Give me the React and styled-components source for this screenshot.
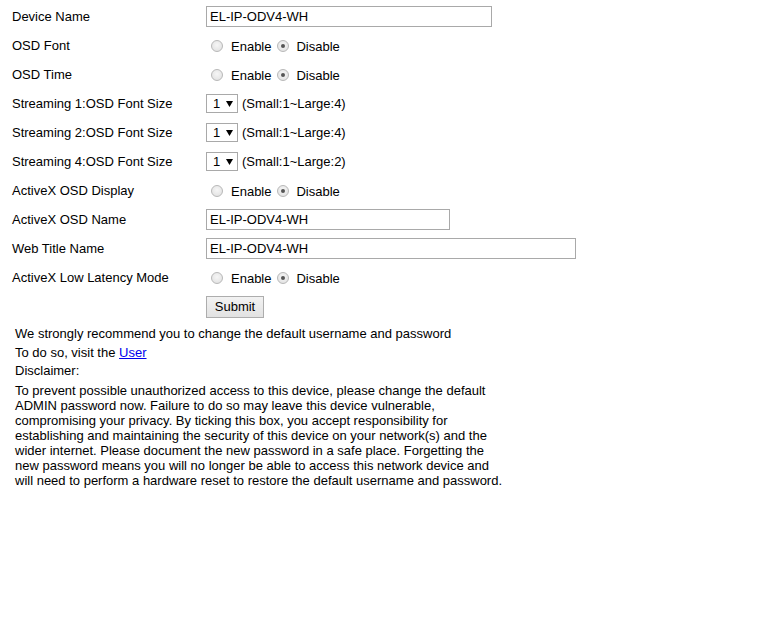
import React from "react";
import styled, { createGlobalStyle } from "styled-components";

const Global = createGlobalStyle`
  html, body { margin: 0; padding: 0; background: #fff; }
  body { font-family: "Liberation Sans", Arial, sans-serif; font-size: 13px; color: #000; }
`;

const Page = styled.div`
  padding: 2px 0 0 0;
`;

const Form = styled.div`
  display: grid;
  grid-template-columns: 194px auto;
  grid-auto-rows: 29px;
  padding-left: 12px;
  align-items: center;
`;

const Label = styled.div`
  font-size: 13px;
  line-height: 15px;
  margin-top: -1px;
`;

const Cell = styled.div`
  display: flex;
  align-items: center;
  height: 100%;
`;

const TextInput = styled.input`
  box-sizing: border-box;
  width: ${(p) => p.$w}px;
  height: 21px;
  border: 1px solid #a9a9a9;
  padding: 0 3px;
  font-family: "Liberation Sans", Arial, sans-serif;
  font-size: 13px;
  color: #000;
  background: #fff;
  outline: none;
  margin: 0;
`;

const RadioGroup = styled.div`
  display: flex;
  align-items: center;
  padding-top: 2px;
`;

const RadioDot = styled.span`
  box-sizing: border-box;
  width: 12px;
  height: 12px;
  border-radius: 50%;
  border: 1px solid #b8b8b8;
  background: radial-gradient(circle at 50% 40%, #f6f6f6 0%, #dedede 100%);
  display: inline-flex;
  align-items: center;
  justify-content: center;
  margin: -2px ${(p) => p.$mr}px 0 ${(p) => p.$ml}px;
  &::after {
    content: "";
    width: 4px;
    height: 4px;
    border-radius: 50%;
    background: ${(p) => (p.$on ? "#555" : "transparent")};
  }
`;

const RadioText = styled.span`
  font-size: 13px;
`;

const SelectBox = styled.div`
  box-sizing: border-box;
  width: 32px;
  height: 19px;
  border: 1px solid #a9a9a9;
  display: flex;
  align-items: center;
  padding-left: 6px;
  gap: 6px;
  font-size: 13px;
  background: #fff;
`;

const Hint = styled.span`
  margin-left: 4px;
  font-size: 13px;
`;

const Button = styled.button`
  box-sizing: border-box;
  height: 22px;
  width: 58px;
  border: 1px solid #adadad;
  border-radius: 0;
  background: linear-gradient(#f2f2f2, #e2e2e2);
  font-family: "Liberation Sans", Arial, sans-serif;
  font-size: 13px;
  color: #000;
  padding: 0;
  margin-top: 0;
`;

const Notice = styled.div`
  padding: 4px 0 0 15px;
`;

const Line = styled.div`
  line-height: 18.5px;
`;

const Link = styled.a`
  color: #0000ee;
  text-decoration: underline;
`;

const Para = styled.p`
  margin: 2px 0 0 0;
  width: 490px;
  line-height: 15px;
`;

function Radio() {
  return (
    <RadioGroup>
      <RadioDot $ml={5} $mr={8} $on={false} />
      <RadioText>Enable</RadioText>
      <RadioDot $ml={6} $mr={7} $on={true} />
      <RadioText>Disable</RadioText>
    </RadioGroup>
  );
}

function Select({ hint }) {
  return (
    <>
      <SelectBox>
        <span>1</span>
        <svg width="7" height="6" viewBox="0 0 7 6">
          <path d="M0 0H7L3.5 6Z" fill="#000" />
        </svg>
      </SelectBox>
      <Hint>{hint}</Hint>
    </>
  );
}

export default function App() {
  return (
    <Page>
      <Global />
      <Form>
        <Label>Device Name</Label>
        <Cell><TextInput $w={286} defaultValue="EL-IP-ODV4-WH" /></Cell>
        <Label>OSD Font</Label>
        <Cell><Radio /></Cell>
        <Label>OSD Time</Label>
        <Cell><Radio /></Cell>
        <Label>Streaming 1:OSD Font Size</Label>
        <Cell><Select hint="(Small:1~Large:4)" /></Cell>
        <Label>Streaming 2:OSD Font Size</Label>
        <Cell><Select hint="(Small:1~Large:4)" /></Cell>
        <Label>Streaming 4:OSD Font Size</Label>
        <Cell><Select hint="(Small:1~Large:2)" /></Cell>
        <Label>ActiveX OSD Display</Label>
        <Cell><Radio /></Cell>
        <Label>ActiveX OSD Name</Label>
        <Cell><TextInput $w={244} defaultValue="EL-IP-ODV4-WH" /></Cell>
        <Label>Web Title Name</Label>
        <Cell><TextInput $w={370} defaultValue="EL-IP-ODV4-WH" /></Cell>
        <Label>ActiveX Low Latency Mode</Label>
        <Cell><Radio /></Cell>
        <div />
        <Cell><Button>Submit</Button></Cell>
      </Form>
      <Notice>
        <Line>We strongly recommend you to change the default username and password</Line>
        <Line>To do so, visit the <Link href="#">User</Link></Line>
        <Line>Disclaimer:</Line>
        <Para>
          To prevent possible unauthorized access to this device, please change the default
          ADMIN password now. Failure to do so may leave this device vulnerable,
          compromising your privacy. By ticking this box, you accept responsibility for
          establishing and maintaining the security of this device on your network(s) and the
          wider internet. Please document the new password in a safe place. Forgetting the
          new password means you will no longer be able to access this network device and
          will need to perform a hardware reset to restore the default username and password.
        </Para>
      </Notice>
    </Page>
  );
}
